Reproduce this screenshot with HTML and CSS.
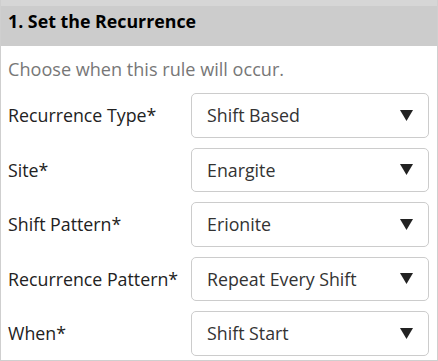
FILE: index.html
```html
<!DOCTYPE html>
<html>
<head>
<meta charset="utf-8">
<link rel="stylesheet" href="styles.css">
</head>
<body>
<div class="panel">
  <div class="topstrip"></div>
  <div class="header">1. Set the Recurrence</div>
  <div class="body">
    <div class="desc">Choose when this rule will occur.</div>
    <div class="row">
      <div class="label">Recurrence Type*</div>
      <div class="select"><span class="value">Shift Based</span><svg class="arrow" width="13" height="11" viewBox="0 0 13 11"><polygon points="0,0 13,0 6.5,11" fill="#222"/></svg></div>
    </div>
    <div class="row">
      <div class="label">Site*</div>
      <div class="select"><span class="value">Enargite</span><svg class="arrow" width="13" height="11" viewBox="0 0 13 11"><polygon points="0,0 13,0 6.5,11" fill="#222"/></svg></div>
    </div>
    <div class="row">
      <div class="label">Shift Pattern*</div>
      <div class="select"><span class="value">Erionite</span><svg class="arrow" width="13" height="11" viewBox="0 0 13 11"><polygon points="0,0 13,0 6.5,11" fill="#222"/></svg></div>
    </div>
    <div class="row">
      <div class="label">Recurrence Pattern*</div>
      <div class="select"><span class="value">Repeat Every Shift</span><svg class="arrow" width="13" height="11" viewBox="0 0 13 11"><polygon points="0,0 13,0 6.5,11" fill="#222"/></svg></div>
    </div>
    <div class="row">
      <div class="label">When*</div>
      <div class="select"><span class="value">Shift Start</span><svg class="arrow" width="13" height="11" viewBox="0 0 13 11"><polygon points="0,0 13,0 6.5,11" fill="#222"/></svg></div>
    </div>
  </div>
</div>
</body>
</html>
```
FILE: styles.css
```css
* { box-sizing: border-box; }
html, body { margin: 0; padding: 0; background: #fff; }
body { font-family: "Open Sans", "Noto Sans", sans-serif; }
.panel {
  width: 438px;
  height: 361px;
  border-left: 1px solid #cfcfcf;
  border-right: 1px solid #cfcfcf;
  border-bottom: 1px solid #cfcfcf;
  overflow: hidden;
}
.topstrip { height: 6px; background: #d6d6d6; margin: 0 -1px; }
.header {
  height: 40px;
  background: #cccccc;
  margin: 0 -1px;
  padding: 3px 0 0 8px;
  font-weight: 700;
  font-size: 17.8px;
  line-height: 24px;
  color: #000;
}
.body { padding: 0 8px 0 7px; }
.desc {
  color: #777;
  font-size: 18.1px;
  line-height: 24px;
  padding-top: 11px;
  height: 47px;
}
.row {
  display: flex;
  align-items: center;
  margin-bottom: 10px;
}
.label {
  width: 183px;
  font-size: 17.8px;
  color: #222;
}
.select {
  flex: 1;
  height: 44.5px;
  border: 1px solid #cccccc;
  border-radius: 5px;
  display: flex;
  align-items: center;
  justify-content: space-between;
  padding: 0 15px 0 15px;
  font-size: 17.8px;
  color: #333;
}
.arrow { display: block; }
```
